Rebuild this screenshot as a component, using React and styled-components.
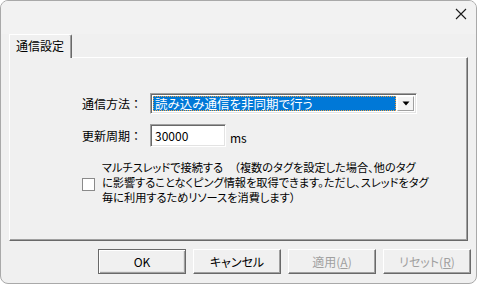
import React from "react";
import styled, { createGlobalStyle } from "styled-components";

const Global = createGlobalStyle`
  html, body { margin: 0; padding: 0; background: #ffffff; }
  body { width: 477px; height: 284px; overflow: hidden; }
`;

const Win = styled.div`
  box-sizing: border-box;
  width: 477px;
  height: 284px;
  border: 1px solid #a9a9a9;
  border-radius: 8px;
  background: #f0f0f0;
  display: flex;
  flex-direction: column;
  overflow: hidden;
  font-family: "Noto Sans CJK JP", sans-serif;
  font-size: 12px;
  color: #000;
  font-feature-settings: "palt";
`;

const TitleBar = styled.div`
  height: 33px;
  flex: none;
  display: flex;
  justify-content: flex-end;
  align-items: flex-start;
  padding: 7px 9px 0 0;
  box-sizing: border-box;
  background: #f2f2f2;
`;

const Body = styled.div`
  padding: 0 8px;
  display: flex;
  flex-direction: column;
`;

const TabStrip = styled.div`
  display: flex;
  align-items: flex-end;
  height: 24px;
`;

const Tab = styled.div`
  box-sizing: border-box;
  width: 63px;
  height: 24px;
  border-left: 1px solid #ffffff;
  border-top: 1px solid #ffffff;
  border-right: 1px solid #696969;
  box-shadow: inset -1px 0 0 #a0a0a0;
  border-top-right-radius: 2px;
  padding: 3px 0 0 6px;
  line-height: 16px;
  white-space: nowrap;
`;

const TabFiller = styled.div`
  flex: 1;
  border-bottom: 1px solid #ffffff;
  border-right: 1px solid #696969;
  height: 0;
`;

const Panel = styled.div`
  box-sizing: border-box;
  height: 183px;
  border-left: 1px solid #ffffff;
  border-right: 1px solid #696969;
  border-bottom: 1px solid #696969;
  box-shadow: inset -1px -1px 0 #a0a0a0;
  padding: 35px 0 0 72px;
  display: flex;
  flex-direction: column;
`;

const Form = styled.div`
  display: grid;
  grid-template-columns: 68px auto;
  row-gap: 10px;
  align-items: center;
  justify-items: start;
`;

const Label = styled.div`
  white-space: nowrap;
  line-height: 16px;
  font-feature-settings: normal;
`;

const Sunken = styled.div`
  box-sizing: border-box;
  background: #ffffff;
  border-top: 1px solid #a0a0a0;
  border-left: 1px solid #a0a0a0;
  border-right: 1px solid #ffffff;
  border-bottom: 1px solid #ffffff;
  box-shadow: inset 1px 1px 0 #696969, inset -1px -1px 0 #e3e3e3;
  display: flex;
  align-items: center;
`;

const Combo = styled(Sunken)`
  width: 267px;
  height: 21px;
  padding: 2px;
`;

const Selected = styled.div`
  flex: 1;
  height: 100%;
  box-sizing: border-box;
  background: #0078d7;
  color: #ffffff;
  outline: 1px dotted #f0a040;
  outline-offset: -1px;
  padding: 0 2px;
  line-height: 15px;
  font-size: 12.5px;
  white-space: nowrap;
`;

const ComboButton = styled.div`
  width: 17px;
  height: 100%;
  box-sizing: border-box;
  margin-left: 1px;
  background: #f4f4f4;
  border-top: 1px solid #ffffff;
  border-left: 1px solid #ffffff;
  border-right: 1px solid #a0a0a0;
  border-bottom: 1px solid #a0a0a0;
  display: flex;
  align-items: center;
  justify-content: center;
`;

const InputRow = styled.div`
  display: flex;
  align-items: center;
  gap: 4px;
`;

const Field = styled(Sunken)`
  width: 76px;
  height: 23px;
  padding: 0 4px;
  line-height: 16px;
`;

const Unit = styled.span`
  padding-top: 3px;
`;

const CheckRow = styled.div`
  margin-top: 13px;
  display: flex;
  align-items: center;
  gap: 7px;
`;

const CheckBox = styled.div`
  width: 13px;
  height: 13px;
  box-sizing: border-box;
  border: 1px solid #8a8a8a;
  background: #ffffff;
  flex: none;
  margin-top: 4px;
`;

const CheckText = styled.div`
  line-height: 15px;
  font-size: 11.2px;
  white-space: nowrap;
`;

const Footer = styled.div`
  display: flex;
  justify-content: flex-end;
  gap: 7px;
  padding: 8px 5px 0 0;
`;

const Button = styled.div`
  box-sizing: border-box;
  width: 88px;
  height: 25px;
  display: flex;
  align-items: center;
  justify-content: center;
  background: #f0f0f0;
  color: ${(p) => (p.$disabled ? "#a0a0a0" : "#000")};
  border-top: 1px solid ${(p) => (p.$default ? "#696969" : "#ffffff")};
  border-left: 1px solid ${(p) => (p.$default ? "#696969" : "#ffffff")};
  border-right: 1px solid #696969;
  border-bottom: 1px solid #696969;
  box-shadow: ${(p) =>
    p.$default
      ? "inset 1px 1px 0 #ffffff, inset -1px -1px 0 #a0a0a0, inset -2px -2px 0 #e3e3e3"
      : "inset -1px -1px 0 #a0a0a0"};
  white-space: nowrap;
  line-height: 16px;
`;

const Key = styled.span`
  text-decoration: underline;
`;

function CloseIcon() {
  return (
    <svg width="12" height="12" viewBox="0 0 12 12">
      <path d="M1 1 L11 11 M11 1 L1 11" stroke="#1a1a1a" strokeWidth="1.1" fill="none" />
    </svg>
  );
}

function Arrow() {
  return (
    <svg width="8" height="5" viewBox="0 0 8 5">
      <path d="M0.5 0.5 H7.5 L4 4.5 Z" fill="#000" />
    </svg>
  );
}

export default function App() {
  return (
    <>
      <Global />
      <Win>
        <TitleBar>
          <CloseIcon />
        </TitleBar>
        <Body>
          <TabStrip>
            <Tab>通信設定</Tab>
            <TabFiller />
          </TabStrip>
          <Panel>
            <Form>
              <Label>通信方法：</Label>
              <Combo>
                <Selected>読み込み通信を非同期で行う</Selected>
                <ComboButton>
                  <Arrow />
                </ComboButton>
              </Combo>
              <Label>更新周期：</Label>
              <InputRow>
                <Field>30000</Field>
                <Unit>ms</Unit>
              </InputRow>
            </Form>
            <CheckRow>
              <CheckBox />
              <CheckText>
                マルチスレッドで接続する　（複数のタグを設定した場合、他のタグ
                <br />
                に影響することなくピング情報を取得できます。ただし、スレッドをタグ
                <br />
                毎に利用するためリソースを消費します）
              </CheckText>
            </CheckRow>
          </Panel>
        </Body>
        <Footer>
          <Button $default>OK</Button>
          <Button>キャンセル</Button>
          <Button $disabled>
            適用(<Key>A</Key>)
          </Button>
          <Button $disabled>
            リセット(<Key>R</Key>)
          </Button>
        </Footer>
      </Win>
    </>
  );
}
